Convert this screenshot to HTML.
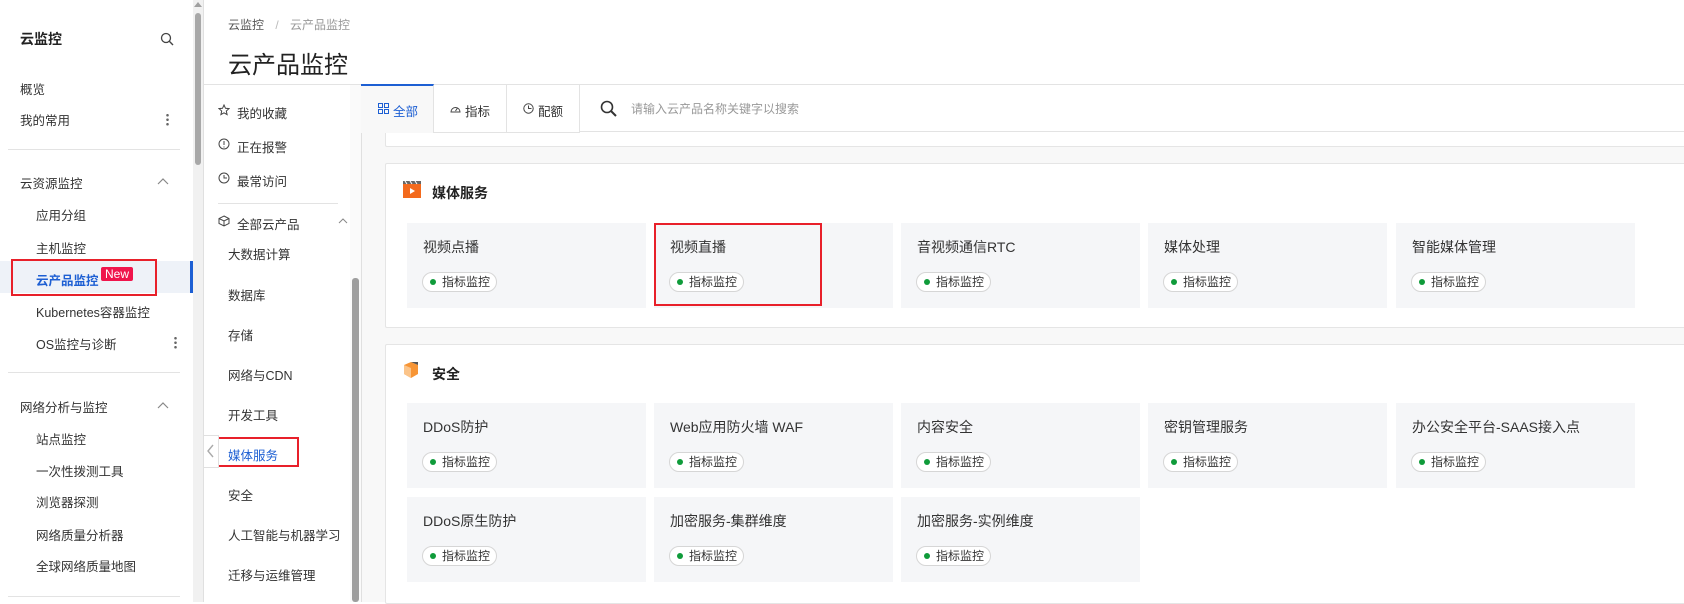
<!DOCTYPE html>
<html><head><meta charset="utf-8"><style>
*{box-sizing:border-box;margin:0;padding:0}
body{width:1684px;height:602px;overflow:hidden;background:#fff;font-family:"Liberation Sans","Noto Sans CJK SC",sans-serif;color:#333;position:relative}
.a{position:absolute;white-space:nowrap}
.s{font-size:12.5px;color:#333}
.m{font-size:12.5px}
.div{position:absolute;height:1px;background:#e3e3e3}
.card{position:absolute;background:#fff;border:1px solid #e5e5e5;border-radius:2px}
.it{position:absolute;width:239px;height:85px;background:#f5f6f8}
.it .t{position:absolute;left:16px;top:14px;font-size:14px;color:#333;white-space:nowrap}
.it .p{position:absolute;left:15px;top:49px;height:20px;border:1px solid #d6d6d6;border-radius:10px;background:#fff;font-size:12px;line-height:18px;padding:0 6px 0 19px;color:#333;white-space:nowrap}
.it .p:before{content:"";position:absolute;left:7px;top:6px;width:6px;height:6px;border-radius:3px;background:#0f9b3a}
.red{position:absolute;border:2px solid #e8202a}
</style></head><body>
<!-- left sidebar -->
<div class="a" style="left:20px;top:29px;font-size:14px;font-weight:bold;color:#222">云监控</div>
<svg class="a" style="left:160px;top:32px" width="14" height="14" viewBox="0 0 14 14"><circle cx="6" cy="6" r="4.5" fill="none" stroke="#444" stroke-width="1.3"/><path d="M9.3 9.3 13 13" stroke="#444" stroke-width="1.4"/></svg>
<div class="a s" style="left:20px;top:79px">概览</div>
<div class="a s" style="left:20px;top:110px">我的常用</div>
<div class="a" style="left:166px;top:113px;width:3px;height:13px;background:radial-gradient(circle,#666 1.2px,transparent 1.4px) 0 0/3px 4.5px"></div>
<div class="div" style="left:8px;top:149px;width:172px"></div>
<div class="a s" style="left:20px;top:173px">云资源监控</div>
<svg class="a" style="left:157px;top:177px" width="12" height="8"><path d="M1 7 6 2 11 7" fill="none" stroke="#888" stroke-width="1.2"/></svg>
<div class="a s" style="left:36px;top:205px">应用分组</div>
<div class="a s" style="left:36px;top:238px">主机监控</div>
<div class="a" style="left:0;top:261px;width:193px;height:32px;background:#eef2f8"></div>
<div class="a" style="left:190px;top:261px;width:3px;height:32px;background:#1d5fd3"></div>
<div class="a" style="left:36px;top:270px;font-size:12.5px;color:#1d5fd3;font-weight:bold">云产品监控</div>
<div class="a" style="left:101px;top:267px;height:14px;background:#f0154c;color:#fff;font-size:12px;line-height:14px;padding:0 4px;border-radius:2px">New</div>
<div class="red" style="left:11px;top:259px;width:146px;height:37px"></div>
<div class="a s" style="left:36px;top:302px">Kubernetes容器监控</div>
<div class="a s" style="left:36px;top:334px">OS监控与诊断</div>
<div class="a" style="left:174px;top:336px;width:3px;height:13px;background:radial-gradient(circle,#666 1.2px,transparent 1.4px) 0 0/3px 4.5px"></div>
<div class="div" style="left:8px;top:372px;width:172px"></div>
<div class="a s" style="left:20px;top:397px">网络分析与监控</div>
<svg class="a" style="left:157px;top:401px" width="12" height="8"><path d="M1 7 6 2 11 7" fill="none" stroke="#888" stroke-width="1.2"/></svg>
<div class="a s" style="left:36px;top:429px">站点监控</div>
<div class="a s" style="left:36px;top:461px">一次性拨测工具</div>
<div class="a s" style="left:36px;top:492px">浏览器探测</div>
<div class="a s" style="left:36px;top:525px">网络质量分析器</div>
<div class="a s" style="left:36px;top:556px">全球网络质量地图</div>
<div class="div" style="left:8px;top:596px;width:172px"></div>
<!-- sidebar scrollbar -->
<div class="a" style="left:193px;top:0;width:10px;height:602px;background:#f1f1f1"></div>
<div class="a" style="left:195px;top:13px;width:6px;height:152px;background:#a8a8a8;border-radius:3px"></div>
<div class="a" style="left:194px;top:2px;width:0;height:0;border-left:4px solid transparent;border-right:4px solid transparent;border-bottom:5px solid #a0a0a0"></div>
<div class="a" style="left:203px;top:0;width:1px;height:602px;background:#e0e0e0"></div>
<!-- header -->
<div class="a" style="left:228px;top:16px;font-size:12px;color:#555">云监控 <span style="color:#bbb;margin:0 8px">/</span> <span style="color:#999">云产品监控</span></div>
<div class="a" style="left:228px;top:45px;font-size:24px;color:#222">云产品监控</div>
<div class="div" style="left:204px;top:84px;width:1480px"></div>
<!-- middle nav -->
<svg class="a" style="left:218px;top:104px" width="12" height="12" viewBox="0 0 12 12"><path d="M6 1 7.5 4.3 11 4.6 8.3 7 9.1 10.6 6 8.8 2.9 10.6 3.7 7 1 4.6 4.5 4.3Z" fill="none" stroke="#444"/></svg>
<div class="a m" style="left:237px;top:103px">我的收藏</div>
<svg class="a" style="left:218px;top:138px" width="12" height="12"><circle cx="6" cy="6" r="5" fill="none" stroke="#444"/><path d="M6 3v4M6 8.5v1" stroke="#444"/></svg>
<div class="a m" style="left:237px;top:137px">正在报警</div>
<svg class="a" style="left:218px;top:172px" width="12" height="12"><circle cx="6" cy="6" r="5" fill="none" stroke="#444"/><path d="M6 3v3h3" fill="none" stroke="#444"/></svg>
<div class="a m" style="left:237px;top:171px">最常访问</div>
<div class="div" style="left:218px;top:203px;width:120px"></div>
<svg class="a" style="left:218px;top:215px" width="12" height="12"><path d="M6 1 11 3.5v5L6 11 1 8.5v-5ZM1 3.5 6 6l5-2.5M6 6v5" fill="none" stroke="#444"/></svg>
<div class="a m" style="left:237px;top:214px">全部云产品</div>
<svg class="a" style="left:338px;top:217px" width="10" height="7"><path d="M1 6 5 2 9 6" fill="none" stroke="#888"/></svg>
<div class="a m" style="left:228px;top:244px">大数据计算</div>
<div class="a m" style="left:228px;top:285px">数据库</div>
<div class="a m" style="left:228px;top:325px">存储</div>
<div class="a m" style="left:228px;top:365px">网络与CDN</div>
<div class="a m" style="left:228px;top:405px">开发工具</div>
<div class="a m" style="left:228px;top:445px;color:#1d5fd3">媒体服务</div>
<div class="red" style="left:216px;top:437px;width:83px;height:30px"></div>
<div class="a m" style="left:228px;top:485px">安全</div>
<div class="a m" style="left:228px;top:525px">人工智能与机器学习</div>
<div class="a m" style="left:228px;top:565px">迁移与运维管理</div>
<div class="a" style="left:204px;top:435px;width:15px;height:33px;background:#fff;border:1px solid #e0e0e0;border-left:none"></div>
<svg class="a" style="left:206px;top:444px" width="9" height="14"><path d="M7 1 2 7l5 6" fill="none" stroke="#aaa" stroke-width="1.4"/></svg>
<div class="a" style="left:350px;top:85px;width:11px;height:517px;background:#fafafa"></div>
<div class="a" style="left:352px;top:278px;width:7px;height:324px;background:#9e9e9e;border-radius:3px"></div>
<div class="a" style="left:361px;top:85px;width:1px;height:517px;background:#e0e0e0"></div>
<!-- content -->
<div class="a" style="left:362px;top:85px;width:1322px;height:517px;background:#f8f8f8"></div>
<div class="card" style="left:385px;top:110px;width:1310px;height:37px"></div>
<div class="a" style="left:579px;top:85px;width:1105px;height:47px;background:#fff;border-bottom:1px solid #e3e3e3"></div>
<div class="a" style="left:361px;top:84px;width:73px;height:49px;background:#f8f8f8;border-top:2px solid #1d5fd3;border-right:1px solid #e3e3e3"></div>
<div class="a" style="left:434px;top:85px;width:73px;height:48px;background:#fff;border-right:1px solid #e3e3e3;border-bottom:1px solid #e3e3e3"></div>
<div class="a" style="left:507px;top:85px;width:73px;height:48px;background:#fff;border-right:1px solid #e3e3e3;border-bottom:1px solid #e3e3e3"></div>
<svg class="a" style="left:378px;top:103px" width="11" height="11"><path d="M.5.5h4v4h-4zM6.5.5h4v4h-4zM.5 6.5h4v4h-4zM6.5 6.5h4v4h-4z" fill="none" stroke="#1d5fd3"/></svg>
<div class="a" style="left:393px;top:101px;font-size:12.5px;color:#1d5fd3">全部</div>
<svg class="a" style="left:450px;top:103px" width="11" height="10"><path d="M1 9A4.5 4.5 0 1 1 10 9ZM5.5 8 7.5 5" fill="none" stroke="#444"/></svg>
<div class="a" style="left:465px;top:101px;font-size:12.5px">指标</div>
<svg class="a" style="left:523px;top:103px" width="11" height="11"><circle cx="5.5" cy="5.5" r="4.7" fill="none" stroke="#444"/><path d="M5.5 2.5v3h3" fill="none" stroke="#444"/></svg>
<div class="a" style="left:538px;top:101px;font-size:12.5px">配额</div>
<svg class="a" style="left:600px;top:100px" width="17" height="17"><circle cx="7" cy="7" r="5.5" fill="none" stroke="#333" stroke-width="1.6"/><path d="M11 11 16 16" stroke="#333" stroke-width="2"/></svg>
<div class="a" style="left:631px;top:100px;font-size:12px;color:#999">请输入云产品名称关键字以搜索</div>
<!-- media -->
<div class="card" style="left:385px;top:163px;width:1310px;height:165px"></div>
<svg class="a" style="left:403px;top:181px" width="18" height="17"><rect y="3" width="18" height="14" fill="#f36a1d"/><rect width="18" height="3" fill="#666"/><path d="M2 0 4 3M7 0 9 3M12 0 14 3" stroke="#fff"/><path d="M7 7v6l5-3z" fill="#fff"/></svg>
<div class="a" style="left:432px;top:183px;font-size:14px;font-weight:bold;color:#222">媒体服务</div>
<div class="it" style="left:407px;top:223px"><div class="t">视频点播</div><div class="p">指标监控</div></div>
<div class="it" style="left:654px;top:223px"><div class="t">视频直播</div><div class="p">指标监控</div></div>
<div class="it" style="left:901px;top:223px"><div class="t">音视频通信RTC</div><div class="p">指标监控</div></div>
<div class="it" style="left:1148px;top:223px"><div class="t">媒体处理</div><div class="p">指标监控</div></div>
<div class="it" style="left:1396px;top:223px"><div class="t">智能媒体管理</div><div class="p">指标监控</div></div>
<div class="red" style="left:654px;top:223px;width:168px;height:83px"></div>
<!-- security -->
<div class="card" style="left:385px;top:344px;width:1310px;height:260px"></div>
<svg class="a" style="left:403px;top:361px" width="16" height="18"><path d="M1 4 8 1 15 4v9l-7 4-7-4Z" fill="#f79535"/><path d="M1 4 8 7v10l-7-4Z" fill="#fbc48a"/><path d="M8 1 15 4 15 1Z" fill="#555"/></svg>
<div class="a" style="left:432px;top:364px;font-size:14px;font-weight:bold;color:#222">安全</div>
<div class="it" style="left:407px;top:403px"><div class="t">DDoS防护</div><div class="p">指标监控</div></div>
<div class="it" style="left:654px;top:403px"><div class="t">Web应用防火墙 WAF</div><div class="p">指标监控</div></div>
<div class="it" style="left:901px;top:403px"><div class="t">内容安全</div><div class="p">指标监控</div></div>
<div class="it" style="left:1148px;top:403px"><div class="t">密钥管理服务</div><div class="p">指标监控</div></div>
<div class="it" style="left:1396px;top:403px"><div class="t">办公安全平台-SAAS接入点</div><div class="p">指标监控</div></div>
<div class="it" style="left:407px;top:497px"><div class="t">DDoS原生防护</div><div class="p">指标监控</div></div>
<div class="it" style="left:654px;top:497px"><div class="t">加密服务-集群维度</div><div class="p">指标监控</div></div>
<div class="it" style="left:901px;top:497px"><div class="t">加密服务-实例维度</div><div class="p">指标监控</div></div>
</body></html>
